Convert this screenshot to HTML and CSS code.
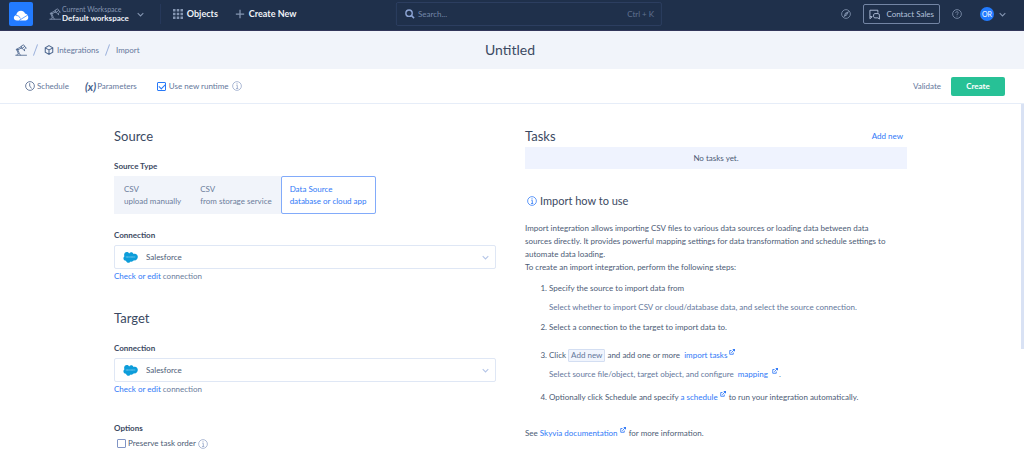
FILE: index.html
```html
<!DOCTYPE html>
<html lang="en">
<head>
<meta charset="utf-8">
<title>Import integration</title>
<link rel="stylesheet" href="styles.css">
</head>
<body>
<svg class="sprite" aria-hidden="true">
  <symbol id="lamp" viewBox="0 0 24 24"><g fill="none" stroke="currentColor" stroke-width="1.700" stroke-linecap="round" stroke-linejoin="round"><path d="M1.500 22.500H23M4 22C4 18.500 10.500 18.500 11 22M6.500 19 3.500 11.500M8.500 18.500 5.500 11M4 10 13 5M5 12 14 7.500"/><circle cx="4" cy="11" r="1.300"/><path d="M12.500 4.500 17 1.500 19.500 4.500 14.500 9ZM19 4.500 22 8M14.500 9 19 13.500M22 8C19.500 8 18 10.500 19 13.500"/></g></symbol>
  <symbol id="info" viewBox="0 0 16 16"><circle cx="8" cy="8" r="7" fill="none" stroke="currentColor" stroke-width="1.300"/><path d="M7 7H8.500V12M6.500 12H10" fill="none" stroke="currentColor" stroke-width="1.400"/><circle cx="8" cy="4.500" r="1" fill="currentColor"/></symbol>
  <symbol id="chevron" viewBox="0 0 10 6"><path d="M1 1 5 5 9 1" fill="none" stroke="currentColor" stroke-width="1.500"/></symbol>
  <symbol id="external" viewBox="0 0 12 12"><path d="M5 3H1.500V10.500H8.500V7M4.500 7.500 10 2" fill="none" stroke="currentColor" stroke-width="1.700"/><path d="M6.500 0H12V5.500L10.400 3.900 8.100 1.600Z" fill="currentColor"/></symbol>
  <symbol id="salesforce" viewBox="0 0 32 23"><path d="M13 3C16-1 21 0 22.500 4 28 2 32 6 31.500 11 31 16 27 18.500 23 17.500 21 20.500 18 21 16 20 14 24 8 24 6.500 18.500 1 19 -1 12 3 9 1 4 4 0 8 0 10 0 12 1 13 3Z" fill="#0d9dda"/><path d="M6 10.500H26" stroke="#7fcdef" stroke-width="2.500" stroke-dasharray="2 .7"/></symbol>
</svg>

<header class="topbar">
  <a class="logo" href="#" aria-label="Home"><svg viewBox="0 0 24 24"><path d="M8 18.500C4 18.500 4 13.500 7.200 13.200 8 8 14.500 7.500 16 11.500 20 12 20.500 18 16.800 18.500Z" fill="#fff"/><path d="M10 18.500 18.800 13M7 13.500Q9.500 12.500 11.500 16.500" fill="none" stroke="#227bff" stroke-width=".7"/></svg></a>
  <button class="workspace"><svg class="icon-lamp"><use href="#lamp"/></svg><span class="workspace-text"><span>Current Workspace</span><strong>Default workspace</strong></span><svg class="icon-chevron"><use href="#chevron"/></svg></button>
  <nav class="topnav">
    <button><svg viewBox="0 0 12 12"><path d="M0 1.500H12M0 6H12M0 10.500H12" stroke="currentColor" stroke-width="3" stroke-dasharray="3 1.500"/></svg>Objects</button>
    <button><svg viewBox="0 0 12 12"><path d="M6 1V11M1 6H11" stroke="currentColor" stroke-width="1.500"/></svg>Create New</button>
  </nav>
  <label class="search"><svg viewBox="0 0 12 12"><circle cx="5" cy="5" r="3.800" fill="none" stroke="currentColor" stroke-width="1.700"/><path d="M7.800 7.800 11 11" stroke="currentColor" stroke-width="2"/></svg><input type="text" placeholder="Search..." aria-label="Search"><span>Ctrl + K</span></label>
  <div class="account">
    <button class="round" aria-label="Explore"><svg viewBox="0 0 16 16"><circle cx="8" cy="8" r="7" fill="none" stroke="currentColor" stroke-width="1.300"/><path d="M13 3 9.500 10 4 13 6.500 6.500Z" fill="currentColor"/><circle cx="8" cy="8" r="1" fill="#1f304b"/></svg></button>
    <button class="sales"><svg viewBox="0 0 18 18"><path d="M5 12.500H1.500V2H14.500V6M1.500 12.500V16L5.500 12.500" fill="none" stroke="currentColor" stroke-width="1.500"/><path d="M9.500 7.500H15A2.500 2.500 0 0 1 17 10V16.500L14.500 14.500H9.500A2.500 2.500 0 0 1 7.500 12.500V9.500A2.500 2.500 0 0 1 9.500 7.500Z" fill="none" stroke="currentColor" stroke-width="1.500"/></svg>Contact Sales</button>
    <button class="round" aria-label="Help"><svg viewBox="0 0 16 16"><circle cx="8" cy="8" r="7" fill="none" stroke="currentColor" stroke-width="1.300"/><path d="M6 6.500C6 3.500 10 3.500 10 6.300 10 7.700 8 7.500 8 9.500M8 10.800V12" fill="none" stroke="currentColor" stroke-width="1.300"/></svg></button>
    <button class="user"><span>OR</span><svg class="icon-chevron"><use href="#chevron"/></svg></button>
  </div>
</header>

<div class="titlebar">
  <nav class="crumbs" aria-label="Breadcrumb">
    <a href="#" aria-label="Workspace"><svg class="icon-lamp"><use href="#lamp"/></svg></a><i></i>
    <a href="#"><svg class="cube" viewBox="0 0 16 16"><path d="M8 1 14 4.500V11.500L8 15 2 11.500V4.500ZM2.500 5 8 8 13.500 5M8 8V14.500" fill="none" stroke="currentColor" stroke-width="1.700"/></svg>Integrations</a><i></i>
    <a href="#">Import</a>
  </nav>
  <h1>Untitled</h1>
</div>

<div class="toolbar">
  <button class="schedule"><svg viewBox="0 0 16 16"><circle cx="8" cy="8" r="7" fill="none" stroke="currentColor" stroke-width="1.500"/><path d="M7.500 3.500V8L10.500 12" fill="none" stroke="currentColor" stroke-width="1.500"/></svg>Schedule</button>
  <button class="params"><b>(x)</b>Parameters</button>
  <label class="runtime"><input type="checkbox" checked>Use new runtime<svg class="icon-info"><use href="#info"/></svg></label>
  <div class="actions"><button>Validate</button><button class="create">Create</button></div>
</div>

<main>
  <div class="columns">
    <form class="setup">
      <section>
        <h2>Source</h2>
        <fieldset>
          <legend>Source Type</legend>
          <div class="types">
            <button type="button"><span>CSV</span>upload manually</button>
            <button type="button"><span>CSV</span>from storage service</button>
            <button type="button" class="selected"><span>Data Source</span>database or cloud app</button>
          </div>
        </fieldset>
        <label class="caption" for="source">Connection</label>
        <div class="picker"><svg class="brand"><use href="#salesforce"/></svg><select id="source"><option>Salesforce</option></select><svg class="icon-chevron"><use href="#chevron"/></svg></div>
        <p class="hint"><a href="#">Check or edit</a> connection</p>
      </section>
      <section>
        <h2>Target</h2>
        <label class="caption" for="target">Connection</label>
        <div class="picker"><svg class="brand"><use href="#salesforce"/></svg><select id="target"><option>Salesforce</option></select><svg class="icon-chevron"><use href="#chevron"/></svg></div>
        <p class="hint"><a href="#">Check or edit</a> connection</p>
      </section>
      <fieldset class="options">
        <legend>Options</legend>
        <label><input type="checkbox">Preserve task order<svg class="icon-info"><use href="#info"/></svg></label>
      </fieldset>
    </form>

    <aside>
      <div class="tasks-head"><h2>Tasks</h2><button>Add new</button></div>
      <p class="empty">No tasks yet.</p>
      <h3><svg class="icon-info"><use href="#info"/></svg>Import how to use</h3>
      <p class="intro">Import integration allows importing CSV files to various data sources or loading data between data sources directly. It provides powerful mapping settings for data transformation and schedule settings to automate data loading.</p>
      <p>To create an import integration, perform the following steps:</p>
      <ol>
        <li>Specify the source to import data from<p>Select whether to import CSV or cloud/database data, and select the source connection.</p></li>
        <li class="roomy">Select a connection to the target to import data to.</li>
        <li class="spaced">Click <kbd>Add new</kbd> and add one or more&nbsp; <a href="#">import tasks<svg class="external"><use href="#external"/></svg></a><p>Select source file/object, target object, and configure&nbsp; <a href="#">mapping <svg class="external"><use href="#external"/></svg></a>.</p></li>
        <li>Optionally click Schedule and specify <a href="#">a schedule<svg class="external"><use href="#external"/></svg></a> to run your integration automatically.</li>
      </ol>
      <p class="more">See <a href="#">Skyvia documentation<svg class="external"><use href="#external"/></svg></a> for more information.</p>
    </aside>
  </div>
</main>
</body>
</html>
```
FILE: styles.css
```css
* { box-sizing: border-box; }
html, body { height: 100%; }
body { margin: 0; display: flex; flex-direction: column; overflow: hidden; background: #fff; color: #4c5b75; font: 8px/13px Lato, "Liberation Sans", sans-serif; }
button, input, select { font: inherit; color: inherit; margin: 0; padding: 0; border: 0; background: none; }
button { display: flex; align-items: center; white-space: nowrap; cursor: pointer; }
a { color: #3079f7; text-decoration: none; }
h1, h2, h3, p, ol, fieldset, legend { margin: 0; padding: 0; border: 0; font-weight: 400; }
svg { flex: none; }
.sprite { position: absolute; width: 0; height: 0; }
.icon-lamp { width: 12px; height: 12px; }
.icon-chevron { width: 7px; height: 5px; }
.icon-info { width: 10px; height: 10px; color: #9aaacb; }

.topbar { flex: none; position: relative; display: flex; align-items: center; height: 31px; padding: 0 18px 2px 9px; background: #1f304b; border-bottom: 1px solid #32365a; color: #8495b1; }
.logo { display: block; width: 24px; height: 24px; border-radius: 2px; background: #227bff; }
.workspace { gap: 1px; margin-left: 16px; text-align: left; }
.workspace .icon-chevron { margin-left: 7px; }
.workspace-text { display: flex; flex-direction: column; line-height: 9px; font-size: 7px; }
.workspace-text strong { color: #edf1f7; font-size: 8px; }
.topnav { display: flex; gap: 17px; margin-left: 16px; padding-left: 12px; border-left: 1px solid #26385a; font-size: 9px; line-height: 20px; }
.topnav button { gap: 4px; color: #f0f3f8; font-weight: 700; }
.topnav svg { width: 10px; height: 10px; color: #8495b1; }
.search { position: absolute; left: 50%; transform: translateX(-50%); margin-left: 17px; top: 2px; width: 26%; height: 24px; display: flex; align-items: center; gap: 3px; padding: 0 7px 0 8px; border: 1px solid #2c3e60; border-radius: 2px; }
.search svg { width: 10px; height: 10px; color: #8ca4d4; }
.search input { flex: 1; min-width: 0; outline: 0; }
.search input::placeholder { color: #7487a9; opacity: 1; }
.search span { color: #5f7090; }
.account { display: flex; align-items: center; margin-left: auto; }
.round svg { width: 10px; height: 10px; }
.sales { gap: 6px; height: 20px; margin: 0 12px; padding: 0 5px; border: 1px solid #7385a4; border-radius: 2px; color: #b4c2dc; }
.sales svg { width: 11px; height: 11px; }
.user { gap: 5px; margin-left: 18px; }
.user span { width: 14px; height: 14px; border-radius: 50%; background: #227bff; color: #fff; font-size: 7px; line-height: 14px; text-align: center; }

.titlebar { flex: none; display: grid; grid-template-columns: 1fr auto 1fr; align-items: center; height: 38px; padding: 0 19px 0 15px; background: #f1f4fa; }
.titlebar h1 { color: #3b4962; font-size: 14px; line-height: 18px; }
.crumbs { display: flex; align-items: center; gap: 8px; }
.crumbs a { display: flex; align-items: center; gap: 3px; color: #64779b; }
.crumbs .cube { width: 10px; height: 10px; color: #506990; }
.crumbs .icon-lamp { color: #506990; }
.crumbs i { width: 1px; height: 12px; background: #9db2dc; transform: rotate(20deg); }

.toolbar { flex: none; display: flex; align-items: center; height: 35px; padding: 0 19px 0 25px; border-bottom: 1px solid #e6edf8; color: #64779b; }
.schedule { gap: 2px; }
.schedule svg { width: 10px; height: 10px; }
.params { gap: 1px; margin-left: 16px; }
.params b { color: #455f8d; font-size: 11px; font-style: italic; }
.runtime { display: flex; align-items: center; gap: 3px; margin-left: 20px; }
input[type="checkbox"] { appearance: none; flex: none; position: relative; width: 9px; height: 9px; border: 1px solid #8195c5; border-radius: 1px; }
.runtime input:checked { border-color: #2879f8; }
.runtime input:checked::after { content: ""; position: absolute; left: 2px; top: 0; width: 3px; height: 5px; border: solid #2879f8; border-width: 0 1px 1px 0; transform: rotate(45deg); }
.actions { display: flex; gap: 10px; margin-left: auto; }
.create { justify-content: center; min-width: 54px; height: 19px; border-radius: 2px; background: #27c196; color: #fff; font-weight: 700; }

main { flex: 1; min-height: 0; overflow: hidden; background: linear-gradient(#d9e2f4, #d9e2f4) right top / 3px 245px no-repeat; }
.columns { display: grid; grid-template-columns: 382px 382px; gap: 29px; justify-content: center; padding: 23px 3px 0 0; }
h2 { color: #3b4962; font-size: 13px; line-height: 18px; }
legend, .caption { display: block; color: #3b4962; font-weight: 700; line-height: 13px; }
.setup section { margin-bottom: 27px; }
.setup h2 { margin-bottom: 15px; }
.types { display: flex; width: max-content; height: 38px; margin: 3px 0 15px; background: #f1f4fa; color: #6b7c9b; }
.types button { flex-direction: column; align-items: flex-start; justify-content: center; padding: 0 9px 0 10px; line-height: 12px; }
.types .selected { border: 1px solid #82abfa; border-radius: 2px; padding: 0 8px; background: #fff; color: #3079f7; }
.picker { display: flex; align-items: center; height: 24px; margin: 3px 0 1px; padding: 0 6px 0 8px; border: 1px solid #dfe7f5; border-radius: 2px; }
.picker select { flex: 1; appearance: none; outline: 0; margin-left: 8px; }
.picker .icon-chevron { color: #b4c5e7; }
.brand { width: 15px; height: 11px; }
.hint { color: #6b7c9b; line-height: 12px; }
.options label { display: flex; align-items: center; gap: 2px; margin-top: 2px; padding-left: 3px; }

.tasks-head { display: flex; align-items: center; justify-content: space-between; padding-right: 4px; }
.tasks-head button { color: #3079f7; }
.empty { margin-top: 2px; background: #eff3fe; line-height: 22px; text-align: center; }
h3 { display: flex; align-items: center; gap: 3px; margin: 23px 0 12px 2px; color: #3b4962; font-size: 11px; line-height: 18px; }
h3 .icon-info { color: #3d82f7; }
.intro { padding-right: 12px; }
ol { margin-top: 8px; padding-left: 24px; }
li { margin-bottom: 7px; }
li p { margin-top: 6px; color: #64779b; }
.roomy { margin-bottom: 15px; }
.spaced { margin-bottom: 10px; }
kbd { display: inline-block; padding: 0 2px; border: 1px solid #d3def2; border-radius: 1px; background: #f1f5fd; color: #64779b; font: 8px/11px Lato, sans-serif; }
.external { width: 6px; height: 6px; margin: 0 1px 0 2px; vertical-align: 3px; }
.more { margin-top: 23px; }
```
